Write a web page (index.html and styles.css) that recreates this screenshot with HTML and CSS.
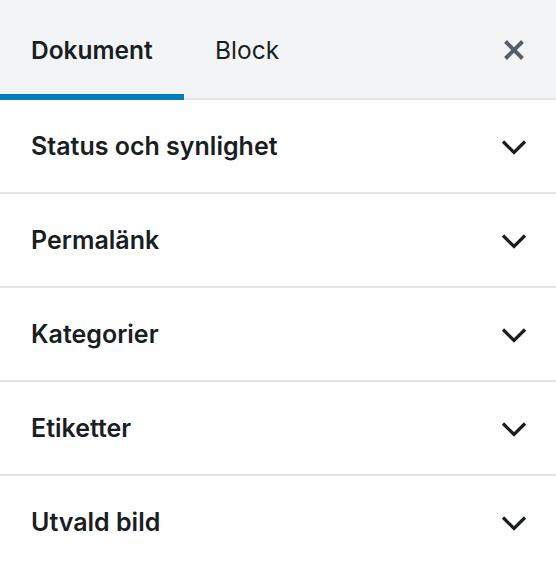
FILE: index.html
```html
<!DOCTYPE html>
<html lang="sv">
<head>
<meta charset="utf-8">
<title>Dokument</title>
<link rel="stylesheet" href="styles.css">
</head>
<body>
<div class="sidebar">
  <div class="tabs">
    <button class="tab active">Dokument</button>
    <button class="tab">Block</button>
    <button class="close" aria-label="Stäng">
      <svg width="40" height="40" viewBox="0 0 20 20"><path d="M14.95 6.46L11.41 10l3.54 3.54-1.41 1.41L10 11.42l-3.53 3.53-1.42-1.42L8.58 10 5.05 6.47l1.42-1.42L10 8.58l3.54-3.53z" fill="#555d66"/></svg>
    </button>
  </div>
  <div class="panel"><span class="title">Status och synlighet</span><svg class="chev" width="30" height="20" viewBox="0 0 30 20"><path d="M4 5.5L15 16.5 26 5.5" fill="none" stroke="#191e23" stroke-width="3.2"/></svg></div>
  <div class="panel"><span class="title">Permalänk</span><svg class="chev" width="30" height="20" viewBox="0 0 30 20"><path d="M4 5.5L15 16.5 26 5.5" fill="none" stroke="#191e23" stroke-width="3.2"/></svg></div>
  <div class="panel"><span class="title">Kategorier</span><svg class="chev" width="30" height="20" viewBox="0 0 30 20"><path d="M4 5.5L15 16.5 26 5.5" fill="none" stroke="#191e23" stroke-width="3.2"/></svg></div>
  <div class="panel"><span class="title">Etiketter</span><svg class="chev" width="30" height="20" viewBox="0 0 30 20"><path d="M4 5.5L15 16.5 26 5.5" fill="none" stroke="#191e23" stroke-width="3.2"/></svg></div>
  <div class="panel"><span class="title">Utvald bild</span><svg class="chev" width="30" height="20" viewBox="0 0 30 20"><path d="M4 5.5L15 16.5 26 5.5" fill="none" stroke="#191e23" stroke-width="3.2"/></svg></div>
</div>
</body>
</html>
```

FILE: styles.css
```css
* { box-sizing: border-box; }
html, body { margin: 0; padding: 0; background: #fff; }
body {
  font-family: Inter, "Noto Sans", "DejaVu Sans", sans-serif;
  color: #191e23;
  width: 556px;
  height: 568px;
  overflow: hidden;
}
.sidebar { width: 556px; }
.tabs {
  display: flex;
  align-items: stretch;
  height: 100px;
  background: #f3f4f5;
  border-bottom: 2px solid #e2e4e7;
}
.tab {
  font-family: inherit;
  font-size: 24.5px;
  color: #191e23;
  background: none;
  border: 0;
  margin: 0 0 -2px 0;
  padding: 0 31px;
  height: 100px;
  cursor: pointer;
  font-weight: 400;
}
.tab.active {
  font-weight: 600;
  width: 184px;
  text-align: left;
  box-shadow: inset 0 -6px 0 #007cba;
}
.close {
  margin-left: auto;
  margin-right: 22px;
  margin-top: 30px;
  width: 40px;
  height: 40px;
  padding: 0;
  border: 0;
  background: none;
  display: flex;
}
.panel {
  display: flex;
  align-items: center;
  justify-content: space-between;
  height: 94px;
  border-bottom: 2px solid #e2e4e7;
  padding: 0 27px 0 31px;
}
.title {
  font-size: 25px;
  font-weight: 600;
}
.chev { display: block; }
```
